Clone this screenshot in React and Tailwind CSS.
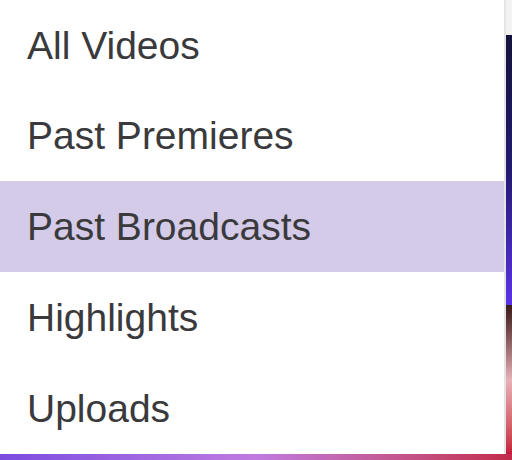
import React from 'react';

const items = [
  { label: 'All Videos', h: 'h-[90px]' },
  { label: 'Past Premieres', h: 'h-[91px]' },
  { label: 'Past Broadcasts', h: 'h-[91px]', active: true },
  { label: 'Highlights', h: 'h-[91px]' },
  { label: 'Uploads', h: 'h-[91px]' },
];

const App = () => {
  return (
    <div className="w-[512px] h-[460px] overflow-hidden bg-white flex flex-col font-['Liberation_Sans',Arial,sans-serif]">
      <div className="flex h-[454px]">
        {/* Menu */}
        <div className="w-[506px] h-full bg-white border-r-2 border-[#e4e4e7] flex flex-col">
          {items.map((item) => (
            <div
              key={item.label}
              className={`${item.h} flex items-center pl-[27px] text-[39px] leading-none text-[#3a3a3d] ${
                item.active ? 'bg-[#d4cbe8]' : ''
              }`}
            >
              {item.label}
            </div>
          ))}
        </div>
        {/* Background peeking on the right */}
        <div className="flex-1 flex flex-col">
          <div className="h-[35px] bg-[#f2f2f2]" />
          <div className="h-[270px] bg-gradient-to-b from-[#15123a] via-[#231a70] to-[#5b33e6]" />
          <div className="flex-1 bg-gradient-to-b from-[#3b1a1a] via-[#e7b0b8] to-[#c21a3b]" />
        </div>
      </div>
      {/* Background peeking at the bottom */}
      <div className="flex-1 bg-gradient-to-r from-[#7b4be0] via-[#c07ae0] to-[#c3284a]" />
    </div>
  );
};

export default App;
